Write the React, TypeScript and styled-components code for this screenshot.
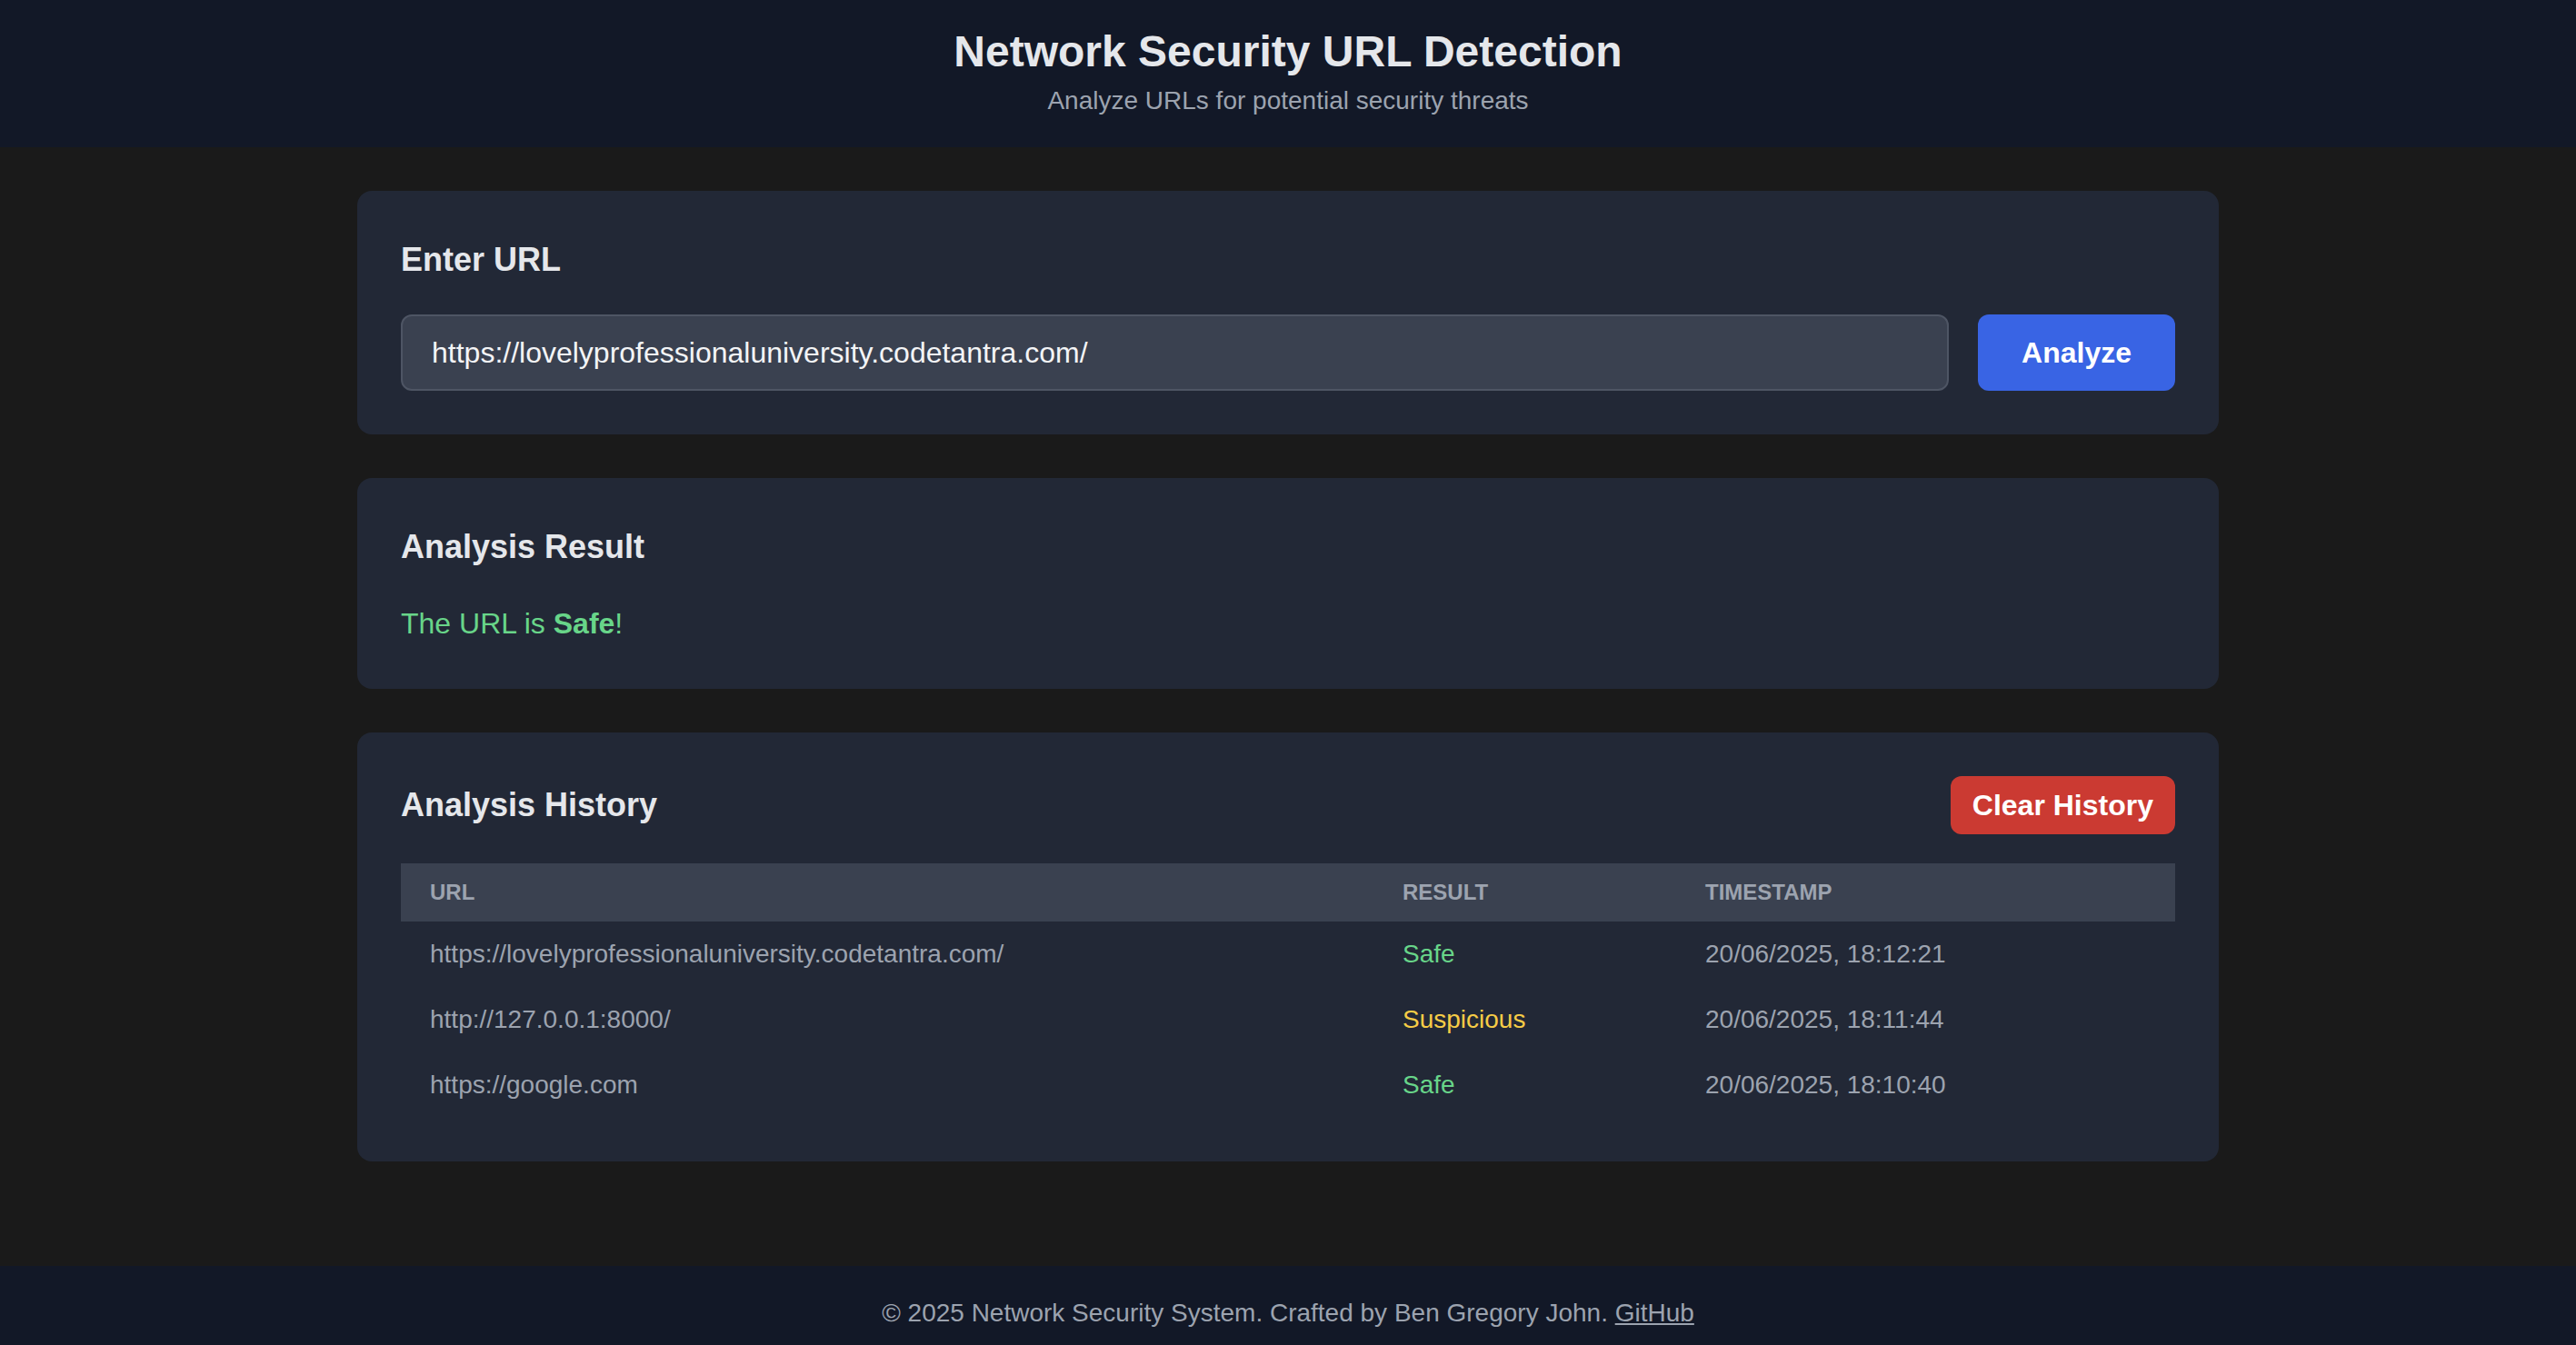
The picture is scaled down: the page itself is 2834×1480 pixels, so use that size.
import React from "react";
import styled, { createGlobalStyle } from "styled-components";

const GlobalStyle = createGlobalStyle`
  html, body {
    margin: 0;
    padding: 0;
    background: #1a1a1a;
    font-family: "Liberation Sans", Arial, Helvetica, sans-serif;
  }
  * { box-sizing: border-box; }
`;

const Page = styled.div`
  display: flex;
  flex-direction: column;
  min-height: 100vh;
`;

const Header = styled.header`
  background: #121827;
  text-align: center;
  padding: 25px 0 31px;
`;

const Title = styled.h1`
  margin: 0;
  font-size: 48px;
  line-height: 64px;
  font-weight: 700;
  color: #e5e7eb;
`;

const Subtitle = styled.p`
  margin: 2px 0 0;
  font-size: 28px;
  line-height: 40px;
  color: #9ca3af;
`;

const Main = styled.main`
  width: 2048px;
  margin: 0 auto;
  padding-top: 48px;
  display: flex;
  flex-direction: column;
  gap: 48px;
`;

const Card = styled.section`
  background: #222836;
  border-radius: 16px;
  padding: 48px;
`;

const CardTitle = styled.h2`
  margin: 0 0 32px;
  font-size: 36px;
  line-height: 56px;
  font-weight: 700;
  color: #e5e7eb;
`;

const InputRow = styled.div`
  display: flex;
  gap: 32px;
  height: 84px;
`;

const UrlInput = styled.input`
  flex: 1;
  height: 84px;
  padding: 0 32px;
  background: #3a4150;
  border: 2px solid #4e5564;
  border-radius: 12px;
  font-family: "Liberation Sans", Arial, sans-serif;
  font-size: 32px;
  color: #f3f4f6;
  outline: none;
`;

const Button = styled.button<{ $variant: "primary" | "danger" }>`
  border: none;
  border-radius: 12px;
  font-family: "Liberation Sans", Arial, sans-serif;
  font-size: 32px;
  font-weight: 700;
  color: #ffffff;
  cursor: pointer;
  background: ${(p) => (p.$variant === "primary" ? "#3964e4" : "#cb3a32")};
  padding: ${(p) => (p.$variant === "primary" ? "0 48px" : "0 24px")};
  height: ${(p) => (p.$variant === "primary" ? "84px" : "64px")};
  line-height: 36px;
`;

const ResultText = styled.p`
  margin: 0;
  font-size: 32px;
  line-height: 48px;
  color: #68d589;

  strong {
    font-weight: 700;
  }
`;

const HistoryHead = styled.div`
  display: flex;
  align-items: center;
  justify-content: space-between;
  height: 64px;
  margin-bottom: 32px;

  h2 {
    margin: 0;
  }
`;

const Table = styled.table`
  width: 100%;
  border-collapse: collapse;
  table-layout: fixed;
`;

const Th = styled.th`
  background: #3a4150;
  text-align: left;
  padding: 16px 32px;
  font-size: 24px;
  line-height: 32px;
  font-weight: 700;
  text-transform: uppercase;
  color: #9ca3af;
`;

const Td = styled.td<{ $tone?: "safe" | "suspicious" }>`
  padding: 16px 32px;
  font-size: 28px;
  line-height: 40px;
  white-space: nowrap;
  color: ${(p) =>
    p.$tone === "safe" ? "#68d589" : p.$tone === "suspicious" ? "#f6cc46" : "#9ca3af"};
`;

const Footer = styled.footer`
  margin-top: 115px;
  background: #121827;
  text-align: center;
  padding: 32px 0 16px;
  font-size: 28px;
  line-height: 40px;
  color: #9ca3af;

  a {
    color: #9ca3af;
    text-decoration: underline;
  }
`;

const history: { url: string; result: "Safe" | "Suspicious"; ts: string }[] = [
  { url: "https://lovelyprofessionaluniversity.codetantra.com/", result: "Safe", ts: "20/06/2025, 18:12:21" },
  { url: "http://127.0.0.1:8000/", result: "Suspicious", ts: "20/06/2025, 18:11:44" },
  { url: "https://google.com", result: "Safe", ts: "20/06/2025, 18:10:40" },
];

export default function App() {
  return (
    <Page>
      <GlobalStyle />
      <Header>
        <Title>Network Security URL Detection</Title>
        <Subtitle>Analyze URLs for potential security threats</Subtitle>
      </Header>
      <Main>
        <Card>
          <CardTitle>Enter URL</CardTitle>
          <InputRow>
            <UrlInput
              type="text"
              defaultValue="https://lovelyprofessionaluniversity.codetantra.com/"
            />
            <Button $variant="primary">Analyze</Button>
          </InputRow>
        </Card>
        <Card>
          <CardTitle>Analysis Result</CardTitle>
          <ResultText>
            The URL is <strong>Safe</strong>!
          </ResultText>
        </Card>
        <Card>
          <HistoryHead>
            <CardTitle as="h2">Analysis History</CardTitle>
            <Button $variant="danger">Clear History</Button>
          </HistoryHead>
          <Table>
            <colgroup>
              <col style={{ width: "1070px" }} />
              <col style={{ width: "333px" }} />
              <col />
            </colgroup>
            <thead>
              <tr>
                <Th>URL</Th>
                <Th>Result</Th>
                <Th>Timestamp</Th>
              </tr>
            </thead>
            <tbody>
              {history.map((h) => (
                <tr key={h.ts}>
                  <Td>{h.url}</Td>
                  <Td $tone={h.result === "Safe" ? "safe" : "suspicious"}>{h.result}</Td>
                  <Td>{h.ts}</Td>
                </tr>
              ))}
            </tbody>
          </Table>
        </Card>
      </Main>
      <Footer>
        © 2025 Network Security System. Crafted by Ben Gregory John. <a href="#">GitHub</a>
      </Footer>
    </Page>
  );
}
